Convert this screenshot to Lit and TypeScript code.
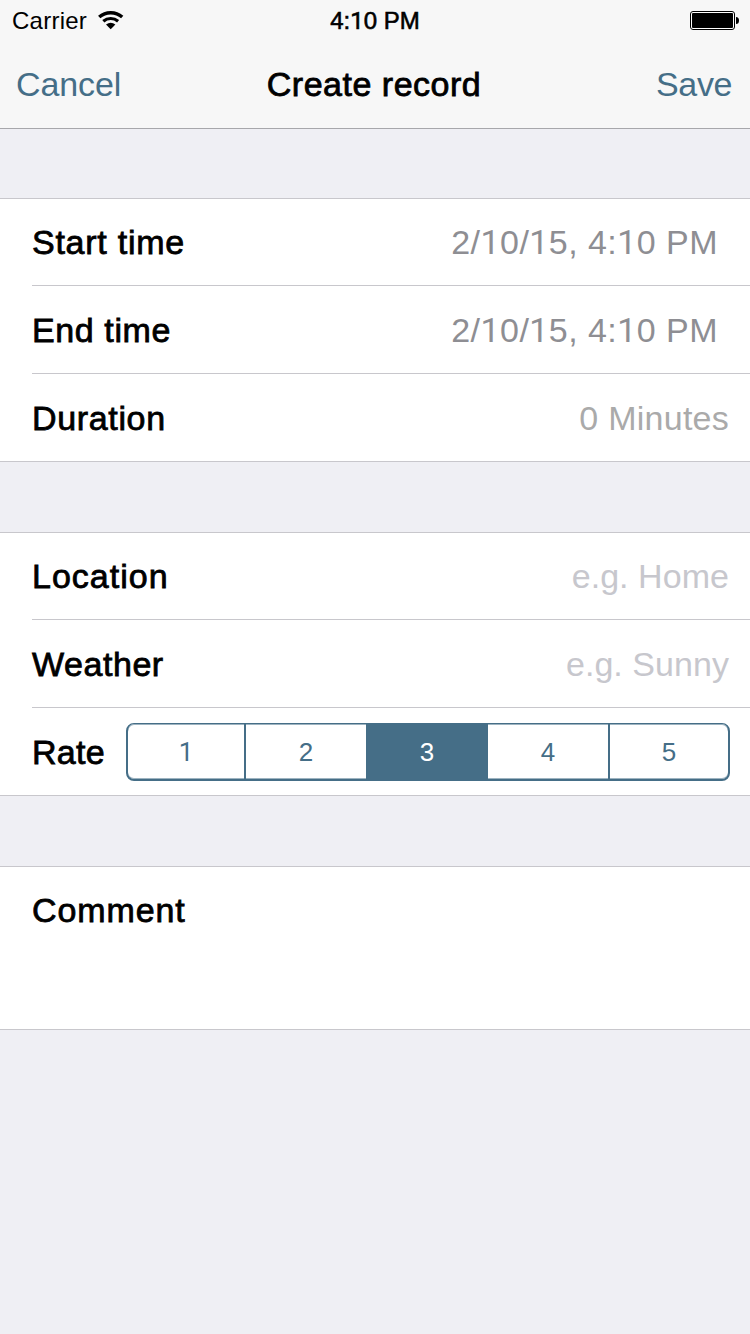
import { LitElement, html, css } from "lit";
import { customElement, property, state } from "lit/decorators.js";
import { classMap } from "lit/directives/class-map.js";

// The "1" takes a face whose figure has no foot.
const figures = (text: string) =>
  text.split(/(1)/).filter(Boolean).map((part) => (part === "1" ? html`<span class="one">1</span>` : part));

const figureStyles = css`
  .one { font-family: Roboto, sans-serif; }
`;

@customElement("status-bar")
class StatusBar extends LitElement {
  static styles = [figureStyles, css`
    :host { display: grid; grid-template-columns: 1fr auto 1fr; align-items: center; height: 41px; padding: 0 10px 0 12px; font-size: 24px; line-height: 40px; color: #000; }
    .left { display: flex; align-items: center; gap: 11px; }
    .carrier { letter-spacing: 0.25px; }
    .time { letter-spacing: 0; margin-right: 2px; -webkit-text-stroke: 0.6px #000; }
    .right { display: flex; justify-content: flex-end; }
    svg { display: block; margin-bottom: 1px; }
  `];
  render() {
    return html`
      <div class="left">
        <span class="carrier">Carrier</span>
        <svg width="26" height="20" viewBox="0 0 26 20">
          <path d="M1.2 7.1 A17.3 17.3 0 0 1 24.2 7.1" fill="none" stroke="#000" stroke-width="3.4"/>
          <path d="M5.3 11.2 A11.5 11.5 0 0 1 20.1 11.2" fill="none" stroke="#000" stroke-width="3.2"/>
          <path d="M12.7 19.2 L8 14.6 A7.5 7.5 0 0 1 17.4 14.6 Z"/>
        </svg>
      </div>
      <span class="time">${figures("4:10 PM")}</span>
      <div class="right">
        <svg width="50" height="20" viewBox="0 0 50 20">
          <rect x="0.5" y="1.5" width="44" height="18" rx="2.5" fill="#fff" stroke="#000"/>
          <rect x="2" y="3" width="41" height="15" rx="1"/>
          <path d="M46 7 Q49 7 49 10.5 Q49 14 46 14 Z"/>
        </svg>
      </div>`;
  }
}

@customElement("nav-bar")
class NavBar extends LitElement {
  static styles = css`
    :host { display: grid; grid-template-columns: 1fr auto 1fr; align-items: center; height: 87px; padding: 0 18px 0 16px; font-size: 34px; line-height: 87px; color: #456e87; border-bottom: 1px solid #a7a7ab; }
    .title { color: #000; letter-spacing: 0.5px; -webkit-text-stroke: 0.8px #000; }
    .cancel { letter-spacing: -0.1px; }
    .save { text-align: right; letter-spacing: -0.4px; }
  `;
  render() {
    return html`<span class="cancel">Cancel</span><span class="title">Create record</span><span class="save">Save</span>`;
  }
}

@customElement("rate-control")
class RateControl extends LitElement {
  @state() private selected = 3;
  static styles = [figureStyles, css`
    :host { display: grid; grid-template-columns: 118px 120px 122px 122px 118px; box-sizing: border-box; width: 604px; height: 58px; border: solid #456e87; border-width: 1px 2px 2px; border-radius: 8px; box-shadow: inset 0 1px #9db3c0, inset 0 -1px #9db3c0; overflow: hidden; font-size: 26px; line-height: 56px; color: #456e87; text-align: center; }
    .segment { box-sizing: border-box; }
    .divided { border-right: 2px solid #456e87; }
    .selected { background: #456e87; color: #fff; }
  `];
  render() {
    return [1, 2, 3, 4, 5].map((n) => html`
      <div class=${classMap({ segment: true, selected: n === this.selected, divided: n === 1 || n === 4 })}
        @click=${() => (this.selected = n)}>${figures(String(n))}</div>`);
  }
}

@customElement("form-row")
class FormRow extends LitElement {
  @property() label = "";
  @property() value = "";
  @property() kind = "";
  static styles = [figureStyles, css`
    :host { display: block; padding-left: 32px; font-size: 34px; }
    .row { display: flex; align-items: center; justify-content: space-between; box-sizing: border-box; height: 88px; border-bottom: 1px solid #c8c7cc; padding-right: 20px; line-height: 88px; white-space: nowrap; }
    :host([first]) .row { height: 87px; line-height: 86px; }
    :host([last]) .row { border-color: transparent; }
    .label { color: #000; -webkit-text-stroke: 0.8px #000; letter-spacing: 0.75px; }
    .label-end { letter-spacing: 0.6px; }
    .label-duration { letter-spacing: 0.65px; }
    .label-location { letter-spacing: 1px; }
    .label-weather { letter-spacing: 0.55px; }
    .label-rate { letter-spacing: 0.3px; }
    .label-comment { letter-spacing: 0.9px; }
    .date { color: #8e8e93; letter-spacing: 0.45px; margin-right: 12px; }
    .duration { color: #aaa; letter-spacing: 0.25px; margin-right: 1px; }
    .hint { color: #c7c7cd; letter-spacing: 0.05px; margin-right: 1px; }
  `];
  render() {
    return html`<div class="row">
      <span class="label label-${this.label.split(" ")[0].toLowerCase()}">${this.label}</span>
      ${this.value ? html`<span class=${this.kind}>${figures(this.value)}</span>` : html`<slot></slot>`}
    </div>`;
  }
}

@customElement("app-root")
class AppRoot extends LitElement {
  static styles = css`
    :host { display: block; min-height: 1334px; background: #efeff4; font-family: "Liberation Sans", Arial, sans-serif; }
    .header { background: #f7f7f7; margin-bottom: 69px; }
    .group { box-sizing: border-box; height: 264px; margin-bottom: 70px; background: #fff; border-top: 1px solid #c8c7cc; border-bottom: 1px solid #c8c7cc; overflow: hidden; }
    .comment { height: 164px; }
  `;
  render() {
    return html`
      <header class="header"><status-bar></status-bar><nav-bar></nav-bar></header>
      <section class="group">
        <form-row first label="Start time" value="2/10/15, 4:10 PM" kind="date"></form-row>
        <form-row label="End time" value="2/10/15, 4:10 PM" kind="date"></form-row>
        <form-row last label="Duration" value="0 Minutes" kind="duration"></form-row>
      </section>
      <section class="group">
        <form-row first label="Location" value="e.g. Home" kind="hint"></form-row>
        <form-row label="Weather" value="e.g. Sunny" kind="hint"></form-row>
        <form-row last label="Rate"><rate-control></rate-control></form-row>
      </section>
      <section class="group comment"><form-row first last label="Comment"></form-row></section>`;
  }
}
